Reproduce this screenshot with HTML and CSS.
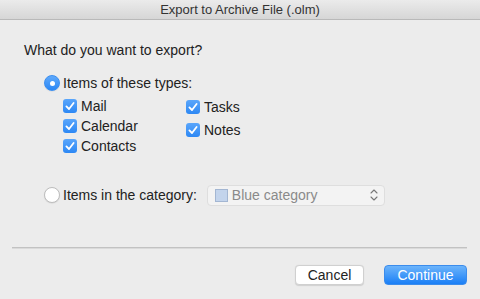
FILE: index.html
```html
<!DOCTYPE html>
<html>
<head>
<meta charset="utf-8">
<link rel="stylesheet" href="styles.css">
</head>
<body>
<div class="window">
  <div class="titlebar">Export to Archive File (.olm)</div>
  <div class="content">
    <div class="heading">What do you want to export?</div>
    <div class="radio-row first">
      <span class="radio on"></span>
      <span class="label">Items of these types:</span>
    </div>
    <div class="types">
      <div class="col">
        <div class="check-row"><span class="check"><svg viewBox="0 0 14 14" width="14" height="14"><path d="M3.4 7.4 L6 10 L10.6 4" fill="none" stroke="#fff" stroke-width="1.8" stroke-linecap="round" stroke-linejoin="round"/></svg></span><span class="label">Mail</span></div>
        <div class="check-row"><span class="check"><svg viewBox="0 0 14 14" width="14" height="14"><path d="M3.4 7.4 L6 10 L10.6 4" fill="none" stroke="#fff" stroke-width="1.8" stroke-linecap="round" stroke-linejoin="round"/></svg></span><span class="label">Calendar</span></div>
        <div class="check-row"><span class="check"><svg viewBox="0 0 14 14" width="14" height="14"><path d="M3.4 7.4 L6 10 L10.6 4" fill="none" stroke="#fff" stroke-width="1.8" stroke-linecap="round" stroke-linejoin="round"/></svg></span><span class="label">Contacts</span></div>
      </div>
      <div class="col right">
        <div class="check-row"><span class="check"><svg viewBox="0 0 14 14" width="14" height="14"><path d="M3.4 7.4 L6 10 L10.6 4" fill="none" stroke="#fff" stroke-width="1.8" stroke-linecap="round" stroke-linejoin="round"/></svg></span><span class="label">Tasks</span></div>
        <div class="check-row"><span class="check"><svg viewBox="0 0 14 14" width="14" height="14"><path d="M3.4 7.4 L6 10 L10.6 4" fill="none" stroke="#fff" stroke-width="1.8" stroke-linecap="round" stroke-linejoin="round"/></svg></span><span class="label">Notes</span></div>
      </div>
    </div>
    <div class="radio-row second">
      <span class="radio"></span>
      <span class="label">Items in the category:</span>
      <div class="select">
        <span class="swatch"></span>
        <span class="select-text">Blue category</span>
        <svg class="arrows" viewBox="0 0 8 14" width="8" height="14"><path d="M1 5 L4 2 L7 5 M1 9 L4 12 L7 9" fill="none" stroke="#777" stroke-width="1.1" stroke-linecap="round" stroke-linejoin="round"/></svg>
      </div>
    </div>
  </div>
  <div class="separator"></div>
  <div class="buttons">
    <button class="btn cancel">Cancel</button>
    <button class="btn primary">Continue</button>
  </div>
</div>
</body>
</html>
```

FILE: styles.css
```css
html, body {
  margin: 0;
  padding: 0;
}
body {
  width: 480px;
  height: 299px;
  overflow: hidden;
  background: #ececec;
  font-family: "Liberation Sans", Arial, sans-serif;
  font-size: 14px;
  color: #222;
}
.window {
  width: 480px;
  height: 299px;
  background: #ececec;
}
.titlebar {
  height: 19px;
  line-height: 19px;
  text-align: center;
  background: linear-gradient(#ebebeb, #d6d6d6);
  border-bottom: 1px solid #b9b9b9;
  color: #333;
  font-size: 13px;
}
.content {
  padding-left: 24px;
}
.heading {
  margin-top: 22px;
  height: 16px;
  line-height: 16px;
}
.radio-row {
  display: flex;
  align-items: center;
  padding-left: 20px;
}
.radio-row.first {
  margin-top: 17px;
  height: 16px;
}
.radio-row.second {
  margin-top: 29px;
  height: 20px;
}
.radio {
  box-sizing: border-box;
  width: 16px;
  height: 16px;
  border-radius: 50%;
  background: #fff;
  border: 1px solid #bdbdbd;
  box-shadow: 0 0.5px 1px rgba(0,0,0,0.1);
  position: relative;
  flex: none;
}
.radio.on {
  background: linear-gradient(#5fa9fb, #2a87f5);
  border-color: #3a8ef0;
}
.radio.on::after {
  content: "";
  position: absolute;
  left: 4.5px;
  top: 4.5px;
  width: 5px;
  height: 5px;
  border-radius: 50%;
  background: #fff;
}
.label {
  line-height: 16px;
}
.radio-row .label {
  margin-left: 3px;
}
.types {
  display: flex;
  padding-left: 39px;
  margin-top: 5px;
}
.col {
  display: flex;
  flex-direction: column;
  width: 123px;
}
.col.right {
  margin-top: 1px;
  gap: 3px;
}
.check-row {
  display: flex;
  align-items: center;
  height: 20px;
}
.check {
  width: 14px;
  height: 14px;
  border-radius: 3px;
  background: linear-gradient(#5aa6fb, #2d88f4);
  flex: none;
  display: flex;
}
.check-row .label {
  margin-left: 4px;
}
.select {
  box-sizing: border-box;
  margin-left: 10px;
  width: 178px;
  height: 21px;
  background: #f3f3f3;
  border: 1px solid #dedede;
  border-radius: 4px;
  display: flex;
  align-items: center;
  padding-left: 7px;
  padding-right: 6px;
}
.swatch {
  box-sizing: border-box;
  width: 13px;
  height: 13px;
  background: #c3d4ec;
  border: 1px solid #a3b6d2;
  flex: none;
}
.select-text {
  margin-left: 4px;
  color: #8a8a8a;
  flex: 1;
}
.arrows {
  flex: none;
}
.separator {
  margin: 42px 13px 0 12px;
  height: 1px;
  background: #c2c2c2;
  border-bottom: 1px solid #dadada;
}
.buttons {
  display: flex;
  justify-content: flex-end;
  gap: 20px;
  margin-top: 16px;
  padding-right: 13px;
}
.btn {
  box-sizing: border-box;
  height: 20px;
  font-family: "Liberation Sans", Arial, sans-serif;
  font-size: 14px;
  border-radius: 4px;
  padding: 0;
  line-height: 18px;
}
.cancel {
  width: 69px;
  background: #fff;
  border: 1px solid #d0d0d0;
  color: #222;
  box-shadow: 0 0.5px 1px rgba(0,0,0,0.12);
}
.primary {
  width: 83px;
  background: linear-gradient(#6cb4fb, #1b7ff6);
  border: 1px solid #3b8cec;
  color: #fff;
}
```
